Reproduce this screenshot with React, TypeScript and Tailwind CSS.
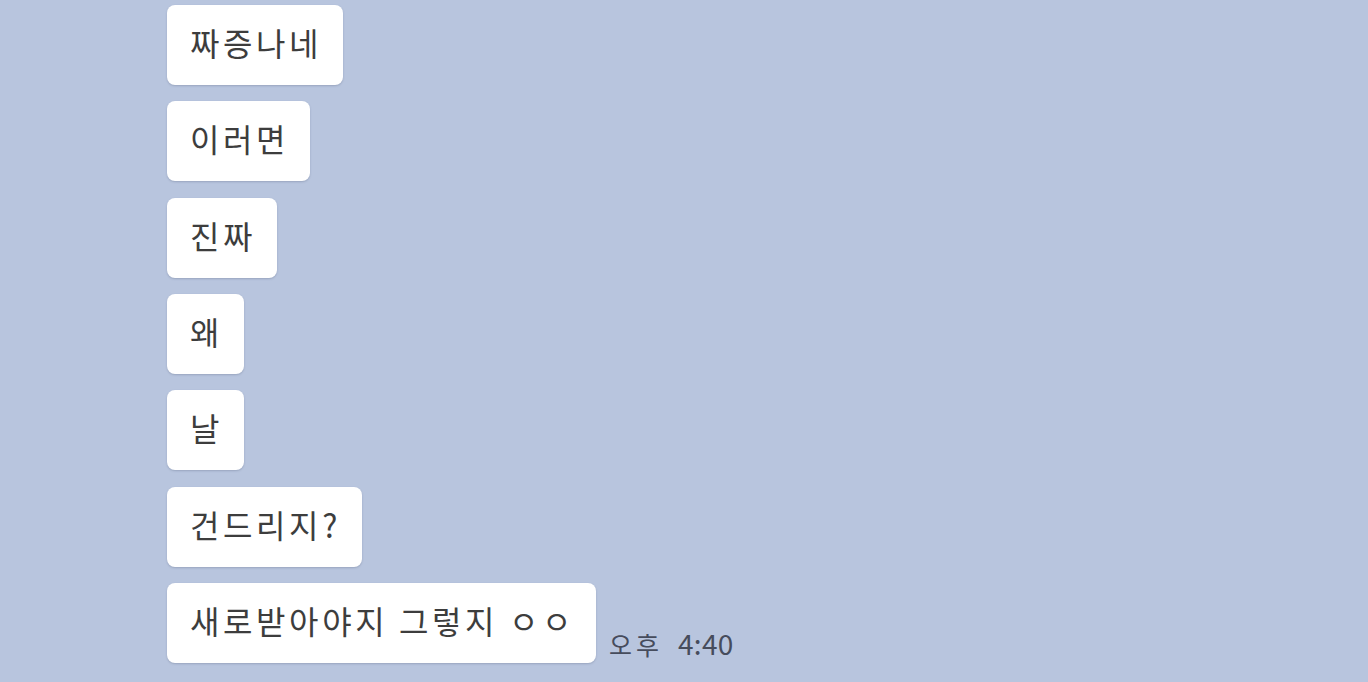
import React from 'react';

const messages = ['짜증나네', '이러면', '진짜', '왜', '날', '건드리지?', '새로받아야지 그렇지 ㅇㅇ'];

export default function App() {
  return (
    <div
      className="w-[1368px] h-[682px] bg-[#b8c5de] overflow-hidden"
      style={{ fontFamily: '"Noto Sans CJK KR", "Noto Sans", sans-serif' }}
    >
      <div className="flex flex-col gap-[16.33px] pt-[5px] pl-[167px]">
        {messages.map((msg, i) => (
          <div key={i} className="flex items-end gap-[13px]">
            <div className="h-[80px] flex items-center pl-[23px] pr-[21px] pb-[6px] bg-white rounded-[8px] shadow-[0_1px_2px_rgba(60,70,100,0.25)] text-[32px] leading-none tracking-[3.6px] text-[#3d3d3d] whitespace-pre">
              {msg}
            </div>
            {i === messages.length - 1 && (
              <span className="flex items-baseline gap-[15px] leading-none text-[#464c5c] pb-[6px]">
                <span className="text-[25px] tracking-[4px]">오후</span>
                <span className="text-[28px] tracking-[0.3px]">4:40</span>
              </span>
            )}
          </div>
        ))}
      </div>
    </div>
  );
}
